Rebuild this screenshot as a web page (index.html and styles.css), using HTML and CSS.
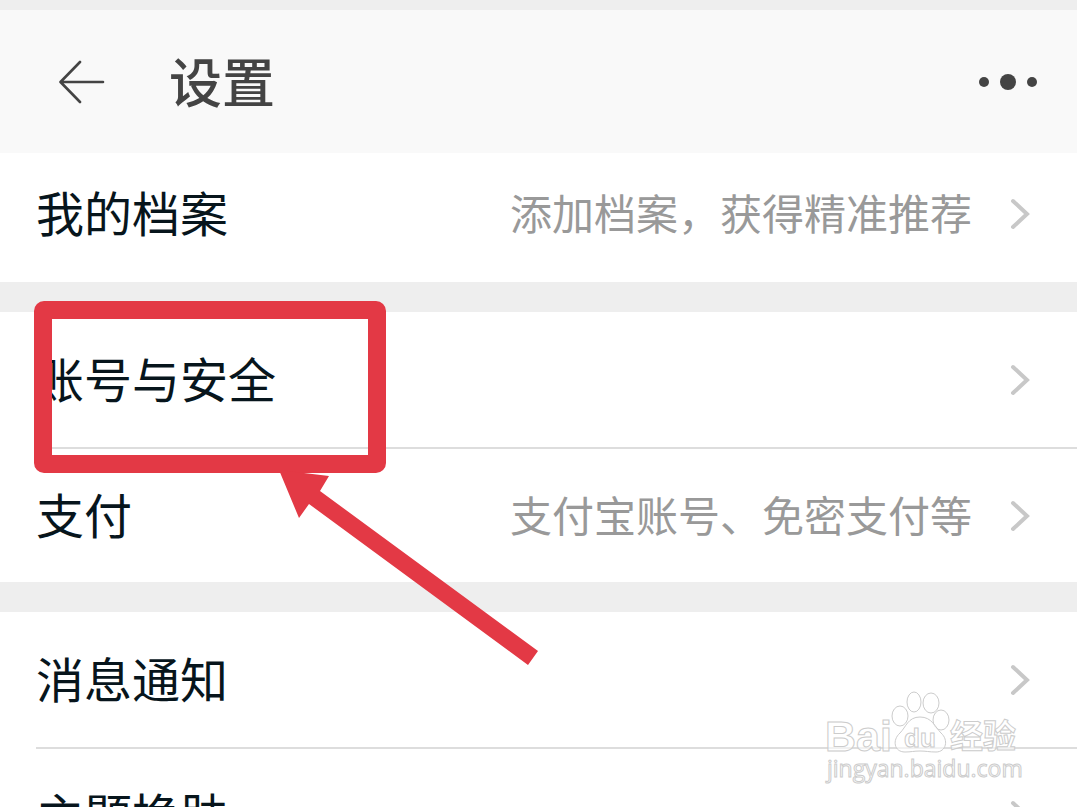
FILE: index.html
```html
<!DOCTYPE html>
<html lang="zh-CN">
<head>
  <meta charset="UTF-8">
  <meta name="viewport" content="width=device-width, initial-scale=1.0">
  <title>设置</title>
  <link rel="stylesheet" href="styles.css">
</head>
<body>
  <div class="page">
    <header class="header">
      <button type="button" class="icon-btn" aria-label="返回">
        <svg width="46" height="44" viewBox="0 0 46 44">
          <path d="M21 2L1.500 22L21 42M2 22H44" fill="none" stroke="#444" stroke-width="2.600" stroke-linecap="round" stroke-linejoin="round"/>
        </svg>
      </button>
      <h1>设置</h1>
      <button type="button" class="icon-btn" aria-label="更多">
        <svg width="60" height="18" viewBox="0 0 60 18" fill="#444">
          <circle cx="6" cy="9" r="5"/>
          <circle cx="30" cy="9" r="8"/>
          <circle cx="54" cy="9" r="5"/>
        </svg>
      </button>
    </header>

    <main>
      <section class="group profile">
        <a class="row" href="#profile">
          <span class="label">我的档案</span>
          <span class="value">添加档案，获得精准推荐</span>
          <svg class="chevron" viewBox="0 0 20 32"><path d="M3 3L17 16L3 29"/></svg>
        </a>
      </section>

      <section class="group">
        <a class="row" href="#account">
          <span class="label">账号与安全</span>
          <svg class="chevron" viewBox="0 0 20 32"><path d="M3 3L17 16L3 29"/></svg>
        </a>
        <a class="row" href="#pay">
          <span class="label">支付</span>
          <span class="value">支付宝账号、免密支付等</span>
          <svg class="chevron" viewBox="0 0 20 32"><path d="M3 3L17 16L3 29"/></svg>
        </a>
        <!-- Highlight around the account row -->
        <svg class="callout" width="510" height="370" viewBox="0 0 510 370">
          <rect x="9" y="10" width="334" height="154" rx="1" fill="none" stroke="#e33945" stroke-width="18" stroke-linejoin="round"/>
          <path d="M245 170L295 176L286 191L504 351L494 365L275 204L265 218Z" fill="#e33945"/>
        </svg>
      </section>

      <section class="group">
        <a class="row" href="#notice">
          <span class="label">消息通知</span>
          <svg class="chevron" viewBox="0 0 20 32"><path d="M3 3L17 16L3 29"/></svg>
        </a>
        <a class="row" href="#theme">
          <span class="label">主题换肤</span>
          <svg class="chevron" viewBox="0 0 20 32"><path d="M3 3L17 16L3 29"/></svg>
        </a>
      </section>
    </main>

    <svg class="watermark" width="200" height="96" viewBox="0 0 200 96">
      <text class="brand" x="1" y="61">Bai</text>
      <ellipse cx="76" cy="26" rx="8" ry="10"/>
      <ellipse cx="90" cy="12" rx="7" ry="10"/>
      <ellipse cx="107" cy="13" rx="8" ry="10"/>
      <ellipse cx="117" cy="30" rx="8" ry="10"/>
      <path d="M96 27C108 27 111 37 117 43C125 50 122 62 112 62C105 62 102 61 96 61C90 61 87 62 81 62C70 62 68 50 76 43C82 37 84 27 96 27Z"/>
      <text class="du" x="80" y="57">du</text>
      <text class="cn" x="126" y="58">经验</text>
      <text class="url" x="3" y="87">jingyan.baidu.com</text>
    </svg>
  </div>
</body>
</html>
```
FILE: styles.css
```css
* {
  box-sizing: border-box;
}
body {
  margin: 0;
  background-color: #eee;
  color: #07151c;
  font-family: "Noto Sans CJK SC", sans-serif;
}
.page {
  position: relative;
  height: 100vh;
  padding-top: 10px;
  overflow: hidden;
}
.header {
  display: flex;
  align-items: center;
  height: 143px;
  padding: 0 39px 0 59px;
  background-color: #f9f9f9;
}
.header h1 {
  flex: 1;
  margin: 0 0 0 64px;
  padding-bottom: 4px;
  color: #444;
  font-size: 53px;
  font-weight: 500;
  line-height: 64px;
}
.icon-btn {
  display: flex;
  padding: 0;
  border: none;
  background: none;
  cursor: pointer;
}
.group {
  position: relative;
  margin-bottom: 30px;
  background-color: #fff;
}
.row {
  display: flex;
  align-items: center;
  height: 135px;
  margin-left: 36px;
  padding-right: 47px;
  color: inherit;
  text-decoration: none;
}
.row + .row {
  border-top: 2px solid #ddd;
}
.profile .row {
  height: 129px;
  padding-bottom: 8px;
}
.label {
  flex: 1;
  padding-bottom: 6px;
  font-size: 48px;
  line-height: 60px;
}
.value {
  margin-right: 38px;
  padding-bottom: 4px;
  color: #999;
  font-size: 42px;
  line-height: 60px;
}
.chevron {
  width: 20px;
  height: 32px;
  fill: none;
  stroke: #c8c8c8;
  stroke-width: 4;
  stroke-linecap: round;
}
.callout {
  position: absolute;
  top: -12px;
  left: 34px;
  z-index: 1;
  pointer-events: none;
}

/* Watermark */
.watermark {
  position: absolute;
  right: 53px;
  bottom: 21px;
  fill: rgba(255, 255, 255, 0.6);
  stroke: #ccc;
  stroke-width: 1;
  pointer-events: none;
}
.brand {
  font: bold 43px "Liberation Sans", sans-serif;
}
.du {
  font: bold 26px "Liberation Sans", sans-serif;
}
.cn {
  font: bold 33px "Noto Sans CJK SC", sans-serif;
}
.url {
  font: 23px "Open Sans", sans-serif;
}
```
